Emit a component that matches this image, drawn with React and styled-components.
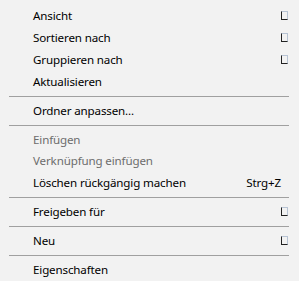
import React from "react";
import styled, { createGlobalStyle } from "styled-components";

const GlobalStyle = createGlobalStyle`
  html, body {
    margin: 0;
    padding: 0;
    background: #f2f2f2;
  }
`;

const Menu = styled.div`
  width: 299px;
  height: 281px;
  box-sizing: border-box;
  padding: 5px 0 0 0;
  background: #f2f2f2;
  font-family: "Segoe UI", "Noto Sans", "Liberation Sans", sans-serif;
  font-size: 11.6px;
  letter-spacing: -0.15px;
  display: flex;
  flex-direction: column;
  overflow: hidden;
`;

const Item = styled.div`
  height: 22px;
  display: flex;
  align-items: center;
  padding: 0 11px 1px 33px;
  box-sizing: border-box;
  color: ${props => (props.disabled ? "#6d6d6d" : "#000")};
`;

const Label = styled.span`
  flex: 1;
  white-space: nowrap;
`;

const Shortcut = styled.span`
  margin-right: 7px;
`;

// the submenu arrow shows up as a missing-glyph box in the screenshot
const Tofu = styled.span`
  width: 5px;
  height: 7px;
  border: 1px solid #b8c4d4;
  border-left-color: #222;
  border-bottom-color: #222;
`;

const Separator = styled.div`
  height: 7px;
  display: flex;
  align-items: center;
  padding: 0 10px 0 9px;

  &::after {
    content: "";
    flex: 1;
    height: 1px;
    background: #a0a0a0;
  }
`;

const items = [
  { label: "Ansicht", sub: true },
  { label: "Sortieren nach", sub: true },
  { label: "Gruppieren nach", sub: true },
  { label: "Aktualisieren" },
  "-",
  { label: "Ordner anpassen..." },
  "-",
  { label: "Einfügen", disabled: true },
  { label: "Verknüpfung einfügen", disabled: true },
  { label: "Löschen rückgängig machen", shortcut: "Strg+Z" },
  "-",
  { label: "Freigeben für", sub: true },
  "-",
  { label: "Neu", sub: true },
  "-",
  { label: "Eigenschaften" },
];

const App = () => {
  return (
    <>
      <GlobalStyle />
      <Menu>
        {items.map((item, idx) =>
          item === "-" ? (
            <Separator key={idx} />
          ) : (
            <Item key={idx} disabled={item.disabled}>
              <Label>{item.label}</Label>
              {item.shortcut && <Shortcut>{item.shortcut}</Shortcut>}
              {item.sub && <Tofu />}
            </Item>
          )
        )}
      </Menu>
    </>
  );
};

export default App;
